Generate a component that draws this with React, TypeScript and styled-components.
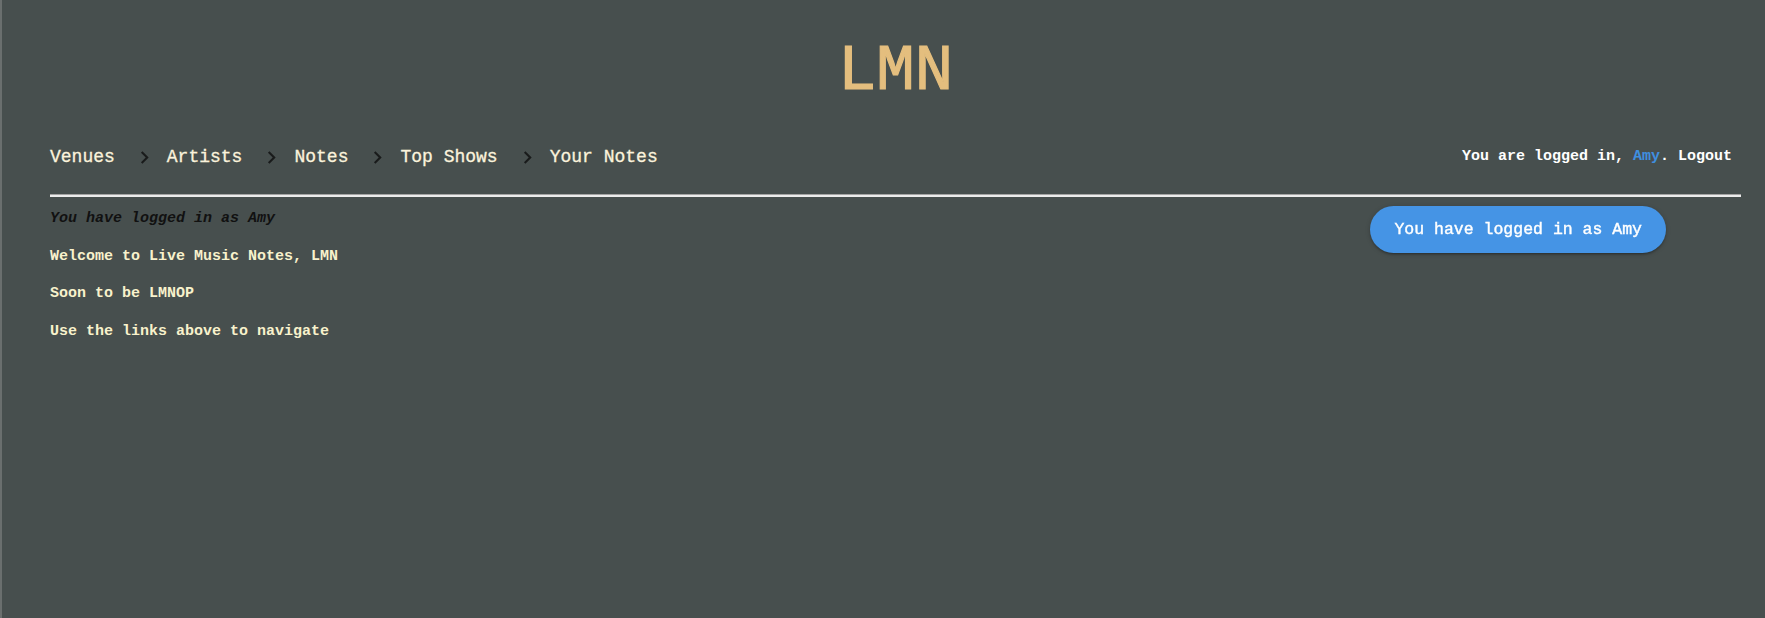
import React from "react";
import styled, { createGlobalStyle } from "styled-components";

const GlobalStyle = createGlobalStyle`
  html, body {
    margin: 0;
    padding: 0;
    min-height: 100%;
  }
  body {
    background: #474f4e;
    font-family: "Courier New", "Liberation Mono", monospace;
    min-height: 100vh;
    border-left: 2px solid #6a6f6e;
    box-sizing: border-box;
  }
`;

const Page = styled.div`
  padding: 0 24px 0 48px;
`;

const Title = styled.h1`
  margin: 37px 0 0;
  text-align: center;
  font-family: "Courier New", "Liberation Mono", monospace;
  font-size: 64px;
  line-height: 70px;
  font-weight: 400;
  color: #e4be7e;
  -webkit-text-stroke: 1.2px #e4be7e;
`;

const NavBar = styled.nav`
  margin-top: 18px;
  height: 64px;
  display: flex;
  align-items: center;
  justify-content: space-between;
`;

const Breadcrumbs = styled.div`
  display: flex;
  align-items: center;
`;

const Crumb = styled.a`
  font-size: 18px;
  line-height: 64px;
  color: #fbf3dc;
  text-decoration: none;
  cursor: pointer;
  -webkit-text-stroke: 0.3px #fbf3dc;
`;

const Separator = styled.svg`
  width: 25px;
  height: 25px;
  margin: 0 10px 0 17px;
  fill: #191b1b;
  flex: none;
`;

const Status = styled.div`
  font-size: 15px;
  line-height: 64px;
  font-weight: 700;
  color: #ffffff;
  padding-right: 9px;
`;

const UserLink = styled.a`
  color: #3f8fe0;
  text-decoration: none;
`;

const Divider = styled.hr`
  margin: 5px 0 0;
  height: 0;
  border: none;
  border-top: 1px solid #a4a4a4;
  border-bottom: 2px solid #ececec;
`;

const Content = styled.main`
  padding-top: 11px;
`;

const Message = styled.p<{ $emphasis?: boolean }>`
  margin: 0 0 15px;
  font-size: 15px;
  line-height: 22.5px;
  font-weight: 700;
  font-style: ${(p) => (p.$emphasis ? "italic" : "normal")};
  color: ${(p) => (p.$emphasis ? "#111111" : "#f8f2cc")};
`;

const Toast = styled.div`
  position: fixed;
  top: 206px;
  right: 99px;
  height: 47px;
  padding: 0 24px;
  display: flex;
  align-items: center;
  border-radius: 24px;
  background: #4594e5;
  color: #ffffff;
  font-size: 16.5px;
  font-weight: 400;
  -webkit-text-stroke: 0.4px #ffffff;
  box-shadow: 0 2px 2px 0 rgba(0, 0, 0, 0.14), 0 3px 1px -2px rgba(0, 0, 0, 0.12),
    0 1px 5px 0 rgba(0, 0, 0, 0.2);
`;

const Chevron = () => (
  <Separator viewBox="0 0 24 24" aria-hidden="true">
    <path d="M10 6L8.59 7.41 13.17 12l-4.58 4.59L10 18l6-6z" />
  </Separator>
);

const links = ["Venues", "Artists", "Notes", "Top Shows", "Your Notes"];

export default function App() {
  return (
    <>
      <GlobalStyle />
      <Page>
        <Title>LMN</Title>
        <NavBar>
          <Breadcrumbs>
            {links.map((l, i) => (
              <React.Fragment key={l}>
                {i > 0 && <Chevron />}
                <Crumb>{l}</Crumb>
              </React.Fragment>
            ))}
          </Breadcrumbs>
          <Status>
            You are logged in, <UserLink>Amy</UserLink>. Logout
          </Status>
        </NavBar>
        <Divider />
        <Content>
          <Message $emphasis>You have logged in as Amy</Message>
          <Message>Welcome to Live Music Notes, LMN</Message>
          <Message>Soon to be LMNOP</Message>
          <Message>Use the links above to navigate</Message>
        </Content>
      </Page>
      <Toast>You have logged in as Amy</Toast>
    </>
  );
}
